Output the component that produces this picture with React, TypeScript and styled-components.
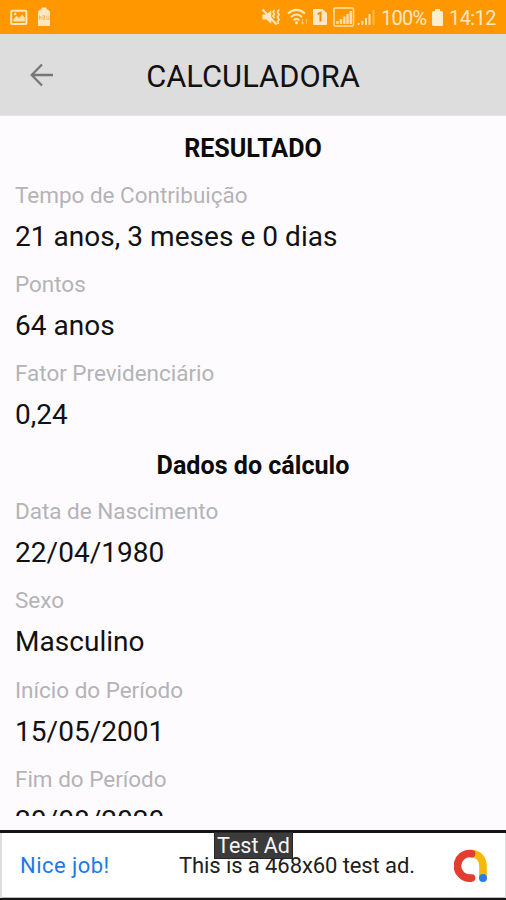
import React from "react";
import styled, { createGlobalStyle } from "styled-components";

const GlobalStyle = createGlobalStyle`
  * { box-sizing: border-box; }
  body { margin: 0; background: #fdfbfe; font-family: Roboto, sans-serif; overflow: hidden; }
`;

const Screen = styled.div`
  width: 506px;
  height: 900px;
  display: flex;
  flex-direction: column;
  overflow: hidden;
  background: #fdfbfe;
`;

const StatusBar = styled.header`
  height: 34px;
  flex: none;
  display: flex;
  align-items: center;
  justify-content: space-between;
  padding: 0 11px 0 10px;
  background: #ff9800;
  color: #ffe7c0;
`;

const StatusGroup = styled.div`
  display: flex;
  align-items: center;
  height: 34px;
  svg { display: block; }
`;

const StatusText = styled.span<{ $width: number; $spacing: number }>`
  width: ${(p) => p.$width}px;
  font-size: 20px;
  line-height: 34px;
  padding-top: 2px;
  letter-spacing: ${(p) => p.$spacing}px;
  white-space: nowrap;
`;

const Toolbar = styled.div`
  height: 82px;
  flex: none;
  display: grid;
  grid-template-columns: 82px 1fr 82px;
  align-items: center;
  background: #dddddd;
  border-bottom: 1px solid #e8e7e8;
`;

const BackButton = styled.button`
  border: 0;
  padding: 0 0 0 29px;
  background: none;
  display: flex;
`;

const Title = styled.h1`
  margin: 0;
  padding-top: 4px;
  font-size: 30.8px;
  font-weight: 400;
  line-height: 40px;
  text-align: center;
  color: #111;
  letter-spacing: 0.05px;
  white-space: nowrap;
`;

const Content = styled.main`
  height: 700px;
  flex: none;
  overflow: hidden;
  padding: 9px 15px 0;
`;

const SectionTitle = styled.h2<{ $height: number; $drop?: number }>`
  margin: 0;
  height: ${(p) => p.$height}px;
  line-height: ${(p) => p.$height}px;
  padding-top: ${(p) => p.$drop ?? 0}px;
  font-size: 25.1px;
  font-weight: 700;
  text-align: center;
  color: #0c0c0c;
`;

const Field = styled.div<{ $height: number }>`
  height: ${(p) => p.$height}px;
`;

const Label = styled.div`
  height: 46px;
  line-height: 46px;
  font-size: 22.5px;
  color: #b4b3b5;
  letter-spacing: -0.02px;
`;

const Value = styled.div`
  height: 37px;
  line-height: 37px;
  font-size: 28px;
  color: #111;
  letter-spacing: 0.04px;
  white-space: nowrap;
`;

const AdSlot = styled.footer`
  position: relative;
  margin-top: 14px;
  height: 70px;
  flex: none;
  display: flex;
  align-items: center;
  padding: 0 18px 0 20px;
  background: #fff;
  border: solid #151515;
  border-width: 3px 0 2px;
  box-shadow: inset 2px 0 #dcdedf, inset -1px 0 #dcdedf, inset 0 -1px #b9bcbd;
`;

const AdCheer = styled.span`
  width: 159px;
  font-size: 22px;
  color: #2378e8;
  letter-spacing: 0.45px;
`;

const AdText = styled.span`
  flex: 1;
  font-size: 22px;
  color: #202020;
  letter-spacing: -0.09px;
  white-space: nowrap;
`;

const AdBadge = styled.span`
  position: absolute;
  left: 214px;
  top: -1px;
  width: 79px;
  height: 27px;
  text-align: center;
  background: #3b3b3b;
  border: 1px solid #262626;
  color: #f5f5f5;
  font-size: 21.5px;
  line-height: 26px;
  white-space: nowrap;
`;

const PictureIcon = () => (
  <svg width="18" height="17" viewBox="0 0 18 17">
    <rect x="1.2" y="1.7" width="15.2" height="13.4" rx="1.2" fill="none" stroke="#ffe7c0" strokeWidth="2" />
    <path d="M3.500 12.500V10l3-3 2.500 2 3.200-3.400 2.600 3v3.900z" fill="#ffe0ae" />
    <circle cx="5.2" cy="5" r="1.2" fill="#ffe7c0" />
  </svg>
);

const FullBatteryIcon = () => (
  <svg width="14" height="20" viewBox="0 0 14 20">
    <path d="M4.500 0.500h5v2H11l2 2.200V18q0 1-1 1H2q-1 0-1-1V4.700l2-2.200h1.500z" fill="#ffe7c0" />
    <path d="M2.500 8.500v4m0-2l1.500-1v3m2-4v4h1.500v-4zm4 0v4h2v-4" fill="none" stroke="#f7b95e" strokeWidth="1" />
  </svg>
);

const MuteIcon = () => (
  <svg width="21" height="20" viewBox="0 0 21 20" fill="none" stroke="#ffe7c0">
    <path d="M1.500 7.500h3.800l5-4.300v13.600l-5-4.300H1.500z" fill="#ffe7c0" stroke="none" />
    <path d="M1.500 2.500l14 15" strokeWidth="2" />
    <path d="M13.500 3l-1.500 2 1.500 2-1.500 2 1.500 2M18 2.500l-1.500 2.500 1.500 2.500-1.500 2.500 1.500 2.500-1.500 2.500 1 2" strokeWidth="1.7" />
  </svg>
);

const WifiIcon = () => (
  <svg width="22" height="20" viewBox="0 0 22 20" fill="none" stroke="#ffe7c0" strokeWidth="2">
    <path d="M1 6.500Q9.500-.8 18 6.500M4 10Q9.500 5 15 10M6.700 13.200q2.800-2.400 5.600 0" />
    <circle cx="9.5" cy="15.8" r="1.5" fill="#ffe7c0" stroke="none" />
    <path d="M15.500 12v5m-1.500-1.500l1.500 1.500 1.500-1.500M19.500 17v-5" stroke="#ffbf59" strokeWidth="1.2" />
  </svg>
);

const SimIcon = () => (
  <svg width="16" height="18" viewBox="0 0 16 18">
    <path d="M1 1h9.500L15 5v11q0 1-1 1H2q-1 0-1-1z" fill="#ffe7c0" />
    <path d="M5.600 6.100l2.900-1.300v8.700" fill="none" stroke="#ed8d00" strokeWidth="2" />
  </svg>
);

const BoxedSignalIcon = () => (
  <svg width="22" height="20" viewBox="0 0 22 20" fill="none" stroke="#ffe0b0">
    <rect x="1" y="1" width="19.5" height="18" rx="1" strokeWidth="1.5" />
    <path d="M4.500 17v-3M8 17v-5M11.300 17V9.500M14.500 17V7M17.800 17V4" strokeWidth="2.4" />
  </svg>
);

const SignalIcon = () => (
  <svg width="18" height="18" viewBox="0 0 18 18" fill="none" strokeWidth="2">
    <path d="M1.500 17v-2M5.300 17v-4M9 17v-7M12.500 17V6" stroke="#ffe0b0" />
    <path d="M16.500 17V2" stroke="#ffb84a" />
  </svg>
);

const BatteryIcon = () => (
  <svg width="13" height="19" viewBox="0 0 13 19">
    <path d="M4 1h5v2h1.500q1.500 0 1.500 1.500v12q0 1.500-1.500 1.500h-8Q1 18 1 16.500v-12Q1 3 2.500 3H4z" fill="#ffedd0" />
  </svg>
);

const BackArrow = () => (
  <svg width="26" height="24" viewBox="0 0 26 24" fill="none" stroke="#777" strokeWidth="2.3">
    <path d="M24 12H3M13 1.500L2.700 12 13 22.500" />
  </svg>
);

const AdMobLogo = () => (
  <svg width="34" height="34" viewBox="0 0 34 34" fill="none" strokeWidth="7.6" strokeLinecap="round">
    <path d="M17 4.600C25 4.600 29 10 29 17.500V28" stroke="#f5b90a" />
    <path d="M17.600 4.700A12.300 12.300 0 1 0 17.600 29" stroke="#e53c30" />
    <circle cx="29" cy="29" r="4" fill="#287ce8" stroke="none" />
  </svg>
);

const LogoFrame = styled.span`
  display: flex;
  svg { display: block; }
`;

const Gap = styled.span<{ $w: number }>`
  width: ${(p) => p.$w}px;
`;

const results = [
  ["Tempo de Contribuição", "21 anos, 3 meses e 0 dias"],
  ["Pontos", "64 anos"],
  ["Fator Previdenciário", "0,24"],
];

const inputs = [
  ["Data de Nascimento", "22/04/1980"],
  ["Sexo", "Masculino"],
  ["Início do Período", "15/05/2001"],
  ["Fim do Período", "20/08/2020"],
];

const FieldList = ({ items, pitch }: { items: string[][]; pitch: number }) => (
  <>
    {items.map(([label, value]) => (
      <Field key={label} $height={pitch}>
        <Label>{label}</Label>
        <Value>{value}</Value>
      </Field>
    ))}
  </>
);

export default function App() {
  return (
    <Screen>
      <GlobalStyle />
      <StatusBar>
        <StatusGroup>
          <PictureIcon />
          <Gap $w={9} />
          <FullBatteryIcon />
        </StatusGroup>
        <StatusGroup>
          <MuteIcon />
          <Gap $w={5} />
          <WifiIcon />
          <Gap $w={3} />
          <SimIcon />
          <Gap $w={5} />
          <BoxedSignalIcon />
          <Gap $w={2} />
          <SignalIcon />
          <Gap $w={6} />
          <StatusText $width={50} $spacing={-0.7}>100%</StatusText>
          <BatteryIcon />
          <Gap $w={5} />
          <StatusText $width={46} $spacing={-0.6}>14:12</StatusText>
        </StatusGroup>
      </StatusBar>
      <Toolbar>
        <BackButton aria-label="Voltar"><BackArrow /></BackButton>
        <Title>CALCULADORA</Title>
      </Toolbar>
      <Content>
        <SectionTitle $height={47}>RESULTADO</SectionTitle>
        <FieldList items={results} pitch={89.2} />
        <SectionTitle $height={48.3} $drop={2}>Dados do cálculo</SectionTitle>
        <FieldList items={inputs} pitch={89.5} />
      </Content>
      <AdSlot>
        <AdCheer>Nice job!</AdCheer>
        <AdText>This is a 468x60 test ad.</AdText>
        <LogoFrame><AdMobLogo /></LogoFrame>
        <AdBadge>Test Ad</AdBadge>
      </AdSlot>
    </Screen>
  );
}
